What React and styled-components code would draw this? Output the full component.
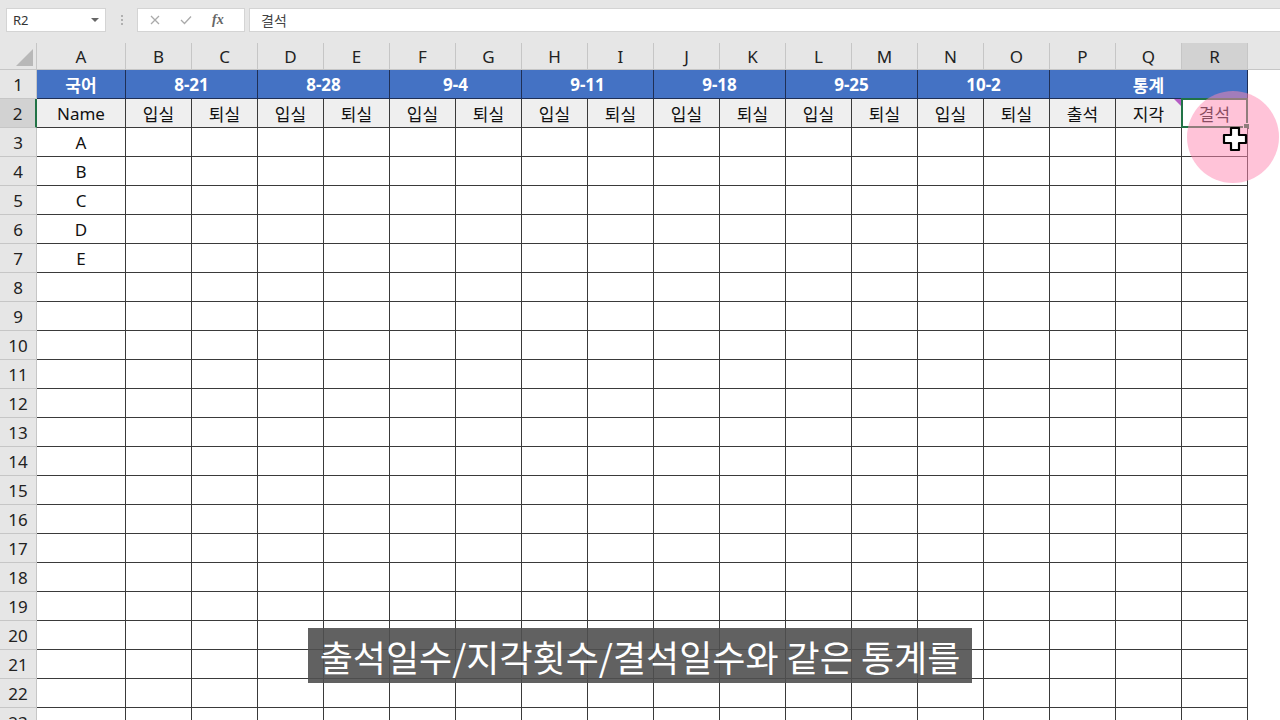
import React from 'react'
import styled, {createGlobalStyle} from 'styled-components'

const GlobalStyle = createGlobalStyle`
  html, body {
    margin: 0;
    padding: 0;
    width: 1280px;
    height: 720px;
    overflow: hidden;
    background: #ffffff;
    font-family: "Noto Sans", "Noto Sans CJK KR", sans-serif;
  }
`

const Page = styled.div`
  position: relative;
  width: 1280px;
  height: 720px;
  overflow: hidden;
  background: #e6e6e6;
`

const FormulaBar = styled.div`
  display: flex;
  align-items: center;
  height: 43px;
  padding: 0 0 3px 6px;
  box-sizing: border-box;
  background: #e6e6e6;
`

const NameBox = styled.div`
  display: flex;
  align-items: center;
  justify-content: space-between;
  width: 100px;
  height: 24px;
  box-sizing: border-box;
  padding: 0 6px 0 6px;
  background: #fff;
  border: 1px solid #d4d4d4;
  font-size: 13px;
  color: #333;
`

const Caret = styled.span`
  width: 0;
  height: 0;
  border-left: 4px solid transparent;
  border-right: 4px solid transparent;
  border-top: 4px solid #666;
`

const Dots = styled.div`
  display: flex;
  flex-direction: column;
  gap: 2px;
  margin: 0 14px 0 15px;
  span {
    width: 2px;
    height: 2px;
    background: #b0b0b0;
  }
`

const FxBox = styled.div`
  display: flex;
  align-items: center;
  width: 108px;
  height: 24px;
  box-sizing: border-box;
  padding: 0 8px 0 12px;
  gap: 20px;
  background: #fff;
  border: 1px solid #d4d4d4;
  color: #b0b0b0;
`

const FxLabel = styled.span`
  font-family: "Liberation Serif", serif;
  font-style: italic;
  font-weight: bold;
  font-size: 14px;
  color: #666;
`

const FormulaInput = styled.div`
  flex: 1;
  display: flex;
  align-items: center;
  height: 24px;
  box-sizing: border-box;
  margin-left: 4px;
  padding-left: 11px;
  background: #fff;
  border: 1px solid #d4d4d4;
  border-right: none;
  font-family: "Noto Sans CJK KR", sans-serif;
  font-size: 14px;
  color: #444;
`

const Grid = styled.div`
  display: grid;
  grid-template-columns: 37px 89px repeat(17, 66px) 1fr;
  grid-template-rows: 27px;
  grid-auto-rows: 29px;
  background: #fff;
`

const Corner = styled.div`
  position: relative;
  background: #e6e6e6;
  border-right: 1px solid #c6c6c6;
  border-bottom: 1px solid #c6c6c6;
  &::after {
    content: '';
    position: absolute;
    right: 3px;
    bottom: 3px;
    width: 0;
    height: 0;
    border-left: 17px solid transparent;
    border-bottom: 17px solid #b8b8b8;
  }
`

const ColHead = styled.div`
  display: flex;
  align-items: center;
  justify-content: center;
  background: ${p => (p.$active ? '#d2d2d2' : '#e6e6e6')};
  border-right: 1px solid #c6c6c6;
  border-bottom: 1px solid #c6c6c6;
  font-size: 17px;
  color: #222;
`

const ColFill = styled.div`
  background: #e6e6e6;
  border-bottom: 1px solid #c6c6c6;
`

const RowHead = styled.div`
  display: flex;
  align-items: center;
  justify-content: center;
  background: ${p => (p.$active ? '#d2d2d2' : '#e6e6e6')};
  border-bottom: 1px solid #c6c6c6;
  border-right: ${p => (p.$active ? '2px solid #217346' : '1px solid #c6c6c6')};
  font-size: 17px;
  color: #222;
`

const Cell = styled.div`
  position: relative;
  display: flex;
  align-items: center;
  justify-content: center;
  box-sizing: border-box;
  border-right: 1px solid #3a3a3a;
  border-bottom: 1px solid #3a3a3a;
  background: ${p => (p.$shade ? '#efefef' : '#fff')};
  font-family: "Noto Sans", "Noto Sans CJK KR", sans-serif;
  font-size: 17px;
  color: #111;
`

const TitleCell = styled(Cell)`
  grid-column: span ${p => p.$span || 1};
  background: #4472c4;
  color: #fff;
  font-weight: bold;
  font-size: 17px;
  border-right: 1px solid #1f2f55;
  border-bottom: 1px solid #1f2f55;
`

const Blank = styled.div`
  background: #fff;
`

const Selected = styled.div`
  position: absolute;
  inset: -1px -1px -1px -1px;
  border: 2px solid #217346;
  pointer-events: none;
`

const Handle = styled.div`
  position: absolute;
  right: -4px;
  bottom: -4px;
  width: 5px;
  height: 5px;
  background: #217346;
  border: 1px solid #fff;
`

const CommentMark = styled.div`
  position: absolute;
  top: 0;
  right: 0;
  width: 0;
  height: 0;
  border-left: 7px solid transparent;
  border-top: 7px solid #b55cc4;
`

const Spot = styled.div`
  position: absolute;
  left: 1187px;
  top: 91px;
  width: 92px;
  height: 92px;
  border-radius: 50%;
  background: rgba(255, 135, 178, 0.5);
  pointer-events: none;
`

const Cursor = styled.svg`
  position: absolute;
  left: 1222px;
  top: 126px;
`

const Subtitle = styled.div`
  position: absolute;
  left: 308px;
  top: 628px;
  width: 664px;
  height: 55px;
  display: flex;
  align-items: center;
  justify-content: center;
  background: rgba(80, 80, 80, 0.9);
  color: #fff;
  font-family: "Noto Sans CJK KR", sans-serif;
  font-size: 36px;
  letter-spacing: 0;
`

const letters = 'ABCDEFGHIJKLMNOPQR'.split('')
const dates = ['8-21', '8-28', '9-4', '9-11', '9-18', '9-25', '10-2']
const names = ['A', 'B', 'C', 'D', 'E']

const App = () => {
    const subRow = [
        ...dates.flatMap(() => ['입실', '퇴실']),
        '출석', '지각', '결석',
    ]

    return (
        <Page>
            <GlobalStyle />
            <FormulaBar>
                <NameBox>R2<Caret /></NameBox>
                <Dots><span /><span /><span /></Dots>
                <FxBox>
                    <svg width="10" height="10" viewBox="0 0 10 10"><path d="M1 1L9 9M9 1L1 9" stroke="#aaa" strokeWidth="1.3" /></svg>
                    <svg width="12" height="10" viewBox="0 0 12 10"><path d="M1 5L4.5 8.5L11 1.5" stroke="#aaa" strokeWidth="1.3" fill="none" /></svg>
                    <FxLabel>fx</FxLabel>
                </FxBox>
                <FormulaInput>결석</FormulaInput>
            </FormulaBar>
            <Grid>
                <Corner />
                {letters.map(l => <ColHead key={l} $active={l === 'R'}>{l}</ColHead>)}
                <ColFill />

                <RowHead>1</RowHead>
                <TitleCell>국어</TitleCell>
                {dates.map(d => <TitleCell key={d} $span={2}>{d}</TitleCell>)}
                <TitleCell $span={3}>통계</TitleCell>
                <Blank />

                <RowHead $active>2</RowHead>
                <Cell $shade>Name</Cell>
                {subRow.map((t, i) => (
                    <Cell $shade={i !== 16} key={i}>
                        {t}
                        {i === 15 && <CommentMark />}
                        {i === 16 && <Selected><Handle /></Selected>}
                    </Cell>
                ))}
                <Blank />

                {Array.from({length: 21}, (_, r) => (
                    <React.Fragment key={r}>
                        <RowHead>{r + 3}</RowHead>
                        <Cell>{names[r] || ''}</Cell>
                        {subRow.map((_, i) => <Cell key={i} />)}
                        <Blank />
                    </React.Fragment>
                ))}
            </Grid>
            <Spot />
            <Cursor width="26" height="26" viewBox="0 0 26 26">
                <path d="M9 2H17V9H24V17H17V24H9V17H2V9H9Z" fill="#fff" stroke="#000" strokeWidth="2.2" strokeLinejoin="round" />
            </Cursor>
            <Subtitle>출석일수/지각횟수/결석일수와 같은 통계를</Subtitle>
        </Page>
    )
}

export default App
